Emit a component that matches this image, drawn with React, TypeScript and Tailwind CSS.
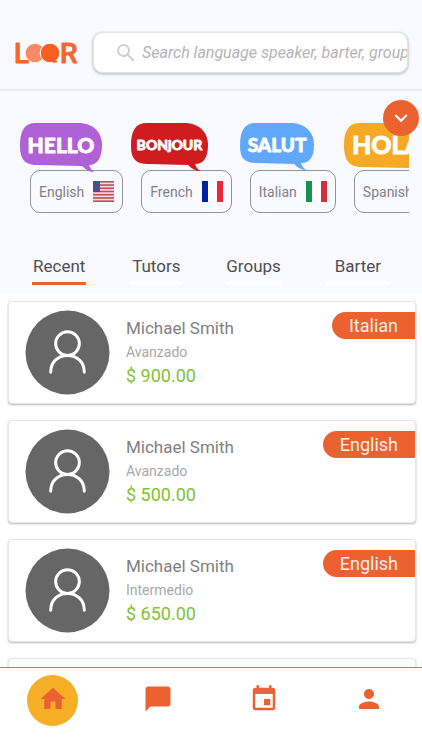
import { useState, type ReactNode } from 'react';
import { MdChatBubble, MdEvent, MdExpandMore, MdHome, MdPerson, MdSearch } from 'react-icons/md';

const TABS = [
  { label: 'Recent', pad: 'px-px' },
  { label: 'Tutors', pad: 'px-px' },
  { label: 'Groups', pad: '' },
  { label: 'Barter', pad: 'px-[9px]' },
];

const SPEAKERS = [
  { id: 1, name: 'Michael Smith', level: 'Avanzado', price: '$ 900.00', language: 'Italian' },
  { id: 2, name: 'Michael Smith', level: 'Avanzado', price: '$ 500.00', language: 'English' },
  { id: 3, name: 'Michael Smith', level: 'Intermedio', price: '$ 650.00', language: 'English' },
  { id: 4, name: 'Michael Smith', level: 'Avanzado', price: '$ 700.00', language: 'French' },
];

const NAV = [
  { label: 'Home', icon: MdHome },
  { label: 'Messages', icon: MdChatBubble },
  { label: 'Calendar', icon: MdEvent },
  { label: 'Profile', icon: MdPerson },
];

function Logo() {
  return (
    <svg viewBox="0 0 64 24" className="h-6 w-16 shrink-0 overflow-visible" role="img" aria-label="Loor">
      <g fill="#f2662f" stroke="#f2662f" strokeLinejoin="round" className="font-[Roboto,sans-serif] font-medium">
        <text x="-1" y="22" fontSize="28" strokeWidth="0.8">L</text>
        <text x="45" y="22" fontSize="28" strokeWidth="0.8">R</text>
      </g>
      <circle cx="20" cy="12" r="9.3" fill="#f58a64" />
      <circle cx="35" cy="12" r="9.8" fill="#f95f22" stroke="#f9faff" strokeWidth="1" />
      <path d="M36 16l7 5-5 1z" fill="#f95f22" />
    </svg>
  );
}

function UsFlag() {
  return (
    <svg viewBox="0 0 21 21" className="h-[21px] w-[21px]">
      <rect width="21" height="21" fill="#f3dfe3" />
      {[0, 1, 2, 3, 4, 5, 6].map(i => (
        <rect key={i} y={i * 3.23} width="21" height="1.62" fill="#c9485b" />
      ))}
      <rect width="7" height="11" fill="#4c4f86" />
    </svg>
  );
}

function Tricolor({ left, right }: { left: string; right: string }) {
  return (
    <svg viewBox="0 0 21 21" className="h-[21px] w-[21px]">
      <rect width="21" height="21" fill="#fff" />
      <rect width="6" height="21" fill={left} />
      <rect x="15" width="6" height="21" fill={right} />
    </svg>
  );
}

function SpainFlag() {
  return (
    <svg viewBox="0 0 21 21" className="h-[21px] w-[21px]">
      <rect width="21" height="21" fill="#c8102e" />
      <rect y="5" width="21" height="11" fill="#ffc72c" />
    </svg>
  );
}

type LanguageProps = {
  label: string;
  greeting: string;
  color: string;
  size: number;
  width: number;
  bodyHeight?: number;
  flag: ReactNode;
};

function Language({ label, greeting, color, size, width, bodyHeight = 42, flag }: LanguageProps) {
  const w = width;
  const h = bodyHeight;
  return (
    <button type="button" className="flex shrink-0 flex-col items-start">
      <svg
        width={w}
        height="50"
        viewBox={`0 0 ${w} 50`}
        className="relative z-10 -mb-[3px] -ml-[10px]"
      >
        <path
          d={`M16 0 L${w - 24} 0 C${w - 8} 0 ${w} 10 ${w} 22 C${w} 34 ${w - 4} ${h} ${w - 13} ${h} Q${w - 12} ${h + 4} ${w - 8} ${h + 7} Q${w - 14} ${h + 7} ${w - 20} ${h + 1} L17 ${h} C4 ${h} 0 35 0 23 C0 8 4 0 16 0 Z`}
          fill={color}
        />
        <text
          x={w / 2}
          y={22 + size * 0.36}
          textAnchor="middle"
          fontSize={size}
          fill="#fff"
          stroke="#fff"
          strokeWidth="0.8"
          strokeLinejoin="round"
          className="font-[Lato,sans-serif] font-black"
        >
          {greeting}
        </text>
      </svg>
      <span className="flex h-[43px] items-center gap-[9px] rounded-[10px] border border-[#929297] px-2 text-sm text-[#818186]">
        {label}
        {flag}
      </span>
    </button>
  );
}

function Avatar() {
  return (
    <svg viewBox="0 0 86 86" className="my-2 size-[85px] shrink-0" role="img" aria-label="Avatar">
      <circle cx="43" cy="43" r="42.5" fill="#666" />
      <g fill="none" stroke="#fff" strokeWidth="3" strokeLinecap="round">
        <circle cx="43" cy="34" r="12" />
        <path d="M26 63c0-10 7-17 17-17s17 7 17 17" />
      </g>
    </svg>
  );
}

export default function App() {
  const [tab, setTab] = useState('Recent');
  const [page, setPage] = useState('Home');

  return (
    <div className="flex h-screen flex-col overflow-hidden bg-white font-[Roboto,sans-serif]">
      <div className="relative bg-[#f9faff]">
        <header className="flex items-center gap-[14px] border-b-2 border-[#e9eaee] pt-8 pr-[14px] pb-4 pl-[15px]">
          <Logo />
          <label className="flex h-[41px] min-w-0 flex-1 items-center overflow-hidden rounded-[10px] border border-[#e4e4e8] bg-white pl-5 shadow-[0_1px_2px_1px_#d0d0d4]">
            <MdSearch size={24} className="shrink-0 text-[#cfcfcf]" />
            <input
              type="text"
              aria-label="Search"
              placeholder="Search language speaker, barter, groups"
              className="ml-1 min-w-0 flex-1 text-base italic placeholder-[#b4b4b4] outline-none"
            />
          </label>
        </header>

        <button
          type="button"
          aria-label="Show more languages"
          className="absolute top-[100px] right-[3px] z-20 flex size-9 items-center justify-center rounded-full bg-[#eb6230] text-white"
        >
          <MdExpandMore size={26} />
        </button>

        <div className="mr-[13px] flex gap-[18px] overflow-x-auto pt-8 pl-[30px] [scrollbar-width:none]">
          <Language label="English" greeting="HELLO" color="#b061d5" size={21} width={82} flag={<UsFlag />} />
          <Language label="French" greeting="BONjOUR" color="#d01c1f" size={14} width={77} bodyHeight={41} flag={<Tricolor left="#00239c" right="#ea2839" />} />
          <Language label="Italian" greeting="SALUT" color="#60a8fb" size={19} width={74} bodyHeight={40} flag={<Tricolor left="#119149" right="#cd2f3d" />} />
          <Language label="Spanish" greeting="HOLA" color="#f5a925" size={25} width={86} bodyHeight={44} flag={<SpainFlag />} />
        </div>

        <div role="tablist" className="flex justify-between px-8 pt-[41px] pb-2">
          {TABS.map(t => (
            <button
              key={t.label}
              type="button"
              role="tab"
              aria-selected={tab === t.label}
              onClick={() => setTab(t.label)}
              className={`border-b-[3px] pb-1 text-[17px] leading-6 text-[#4e4e50] ${t.pad} ${
                tab === t.label ? 'border-[#eb6230]' : 'border-white'
              }`}
            >
              {t.label}
            </button>
          ))}
        </div>
      </div>

      <main className="flex min-h-0 flex-1 flex-col gap-4 overflow-y-auto pt-2 pr-[6px] pl-2 [scrollbar-width:none]">
        {SPEAKERS.map(s => (
          <article
            key={s.id}
            className="flex shrink-0 items-start rounded border border-[#e6e6e8] bg-white pl-4 shadow-[0_1px_2px_#b8b8b8]"
          >
            <Avatar />
            <div className="ml-4 pt-[14px]">
              <h2 className="text-[17px] leading-6 text-[#808080]">{s.name}</h2>
              <p className="text-sm leading-6 text-[#a8a8a8]">{s.level}</p>
              <p className="text-lg leading-6 text-[#7fc236]">{s.price}</p>
            </div>
            <span className="mt-[10px] ml-auto rounded-l-full bg-[#eb6230] px-[17px] text-lg leading-[27px] text-[#ffeee6]">
              {s.language}
            </span>
          </article>
        ))}
      </main>

      <nav className="relative z-10 flex h-[83px] shrink-0 justify-around border-t border-[#ee6f47] bg-white pt-[7px]">
        {NAV.map(({ label, icon: Icon }) => (
          <button
            key={label}
            type="button"
            aria-label={label}
            onClick={() => setPage(label)}
            className={`flex size-[51px] items-center justify-center rounded-full pb-1 text-[#eb6230] ${
              page === label ? 'bg-[#f6ae27]' : ''
            }`}
          >
            <Icon size={30} />
          </button>
        ))}
      </nav>
    </div>
  );
}
